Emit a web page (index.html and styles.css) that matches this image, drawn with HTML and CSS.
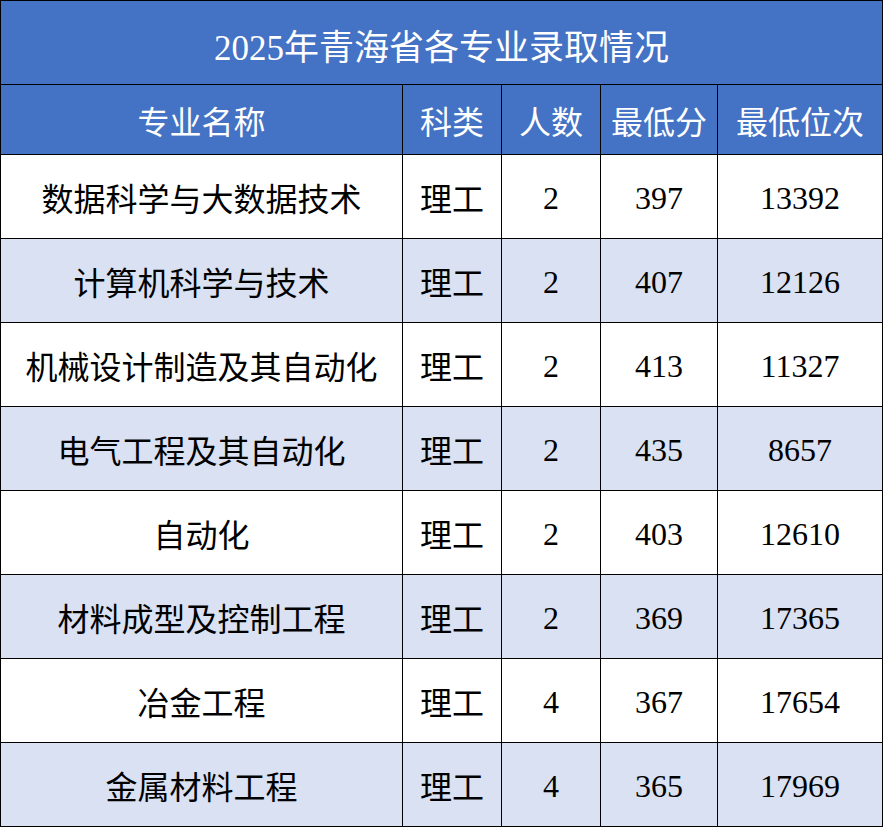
FILE: index.html
```html
<!DOCTYPE html>
<html lang="zh">
<head>
<meta charset="utf-8">
<title>2025年青海省各专业录取情况</title>
<link rel="stylesheet" href="styles.css">
</head>
<body>
<div class="sheet">
  <div class="cell title">2025年青海省各专业录取情况</div>
  <div class="cell head">专业名称</div>
  <div class="cell head">科类</div>
  <div class="cell head">人数</div>
  <div class="cell head">最低分</div>
  <div class="cell head">最低位次</div>

  <div class="cell">数据科学与大数据技术</div><div class="cell">理工</div><div class="cell num">2</div><div class="cell num">397</div><div class="cell num">13392</div>
  <div class="cell alt">计算机科学与技术</div><div class="cell alt">理工</div><div class="cell alt num">2</div><div class="cell alt num">407</div><div class="cell alt num">12126</div>
  <div class="cell">机械设计制造及其自动化</div><div class="cell">理工</div><div class="cell num">2</div><div class="cell num">413</div><div class="cell num">11327</div>
  <div class="cell alt">电气工程及其自动化</div><div class="cell alt">理工</div><div class="cell alt num">2</div><div class="cell alt num">435</div><div class="cell alt num">8657</div>
  <div class="cell">自动化</div><div class="cell">理工</div><div class="cell num">2</div><div class="cell num">403</div><div class="cell num">12610</div>
  <div class="cell alt">材料成型及控制工程</div><div class="cell alt">理工</div><div class="cell alt num">2</div><div class="cell alt num">369</div><div class="cell alt num">17365</div>
  <div class="cell">冶金工程</div><div class="cell">理工</div><div class="cell num">4</div><div class="cell num">367</div><div class="cell num">17654</div>
  <div class="cell alt">金属材料工程</div><div class="cell alt">理工</div><div class="cell alt num">4</div><div class="cell alt num">365</div><div class="cell alt num">17969</div>
</div>
</body>
</html>
```
FILE: styles.css
```css
* { box-sizing: border-box; }
html, body { margin: 0; padding: 0; background: #fff; }
body {
  font-family: "Liberation Serif", "Noto Sans CJK SC", serif;
  color: #000;
}
.sheet {
  display: grid;
  grid-template-columns: 402px 99px 99px 117px 165px;
  grid-template-rows: 84px 70px repeat(8, 84px);
  width: 883px;
  border-left: 1px solid #000;
  border-top: 1px solid #000;
}
.cell {
  display: flex;
  align-items: center;
  justify-content: center;
  border-right: 1px solid #000;
  border-bottom: 1px solid #000;
  font-size: 32px;
  background: #fff;
  white-space: nowrap;
}
.num { padding-top: 4px; }
.alt { background: #d9e1f2; }
.title {
  grid-column: 1 / -1;
  background: #4472c4;
  color: #fff;
  font-size: 35px;
  padding-top: 4px;
}
.head {
  background: #4472c4;
  color: #fff;
  font-size: 32px;
}
```
